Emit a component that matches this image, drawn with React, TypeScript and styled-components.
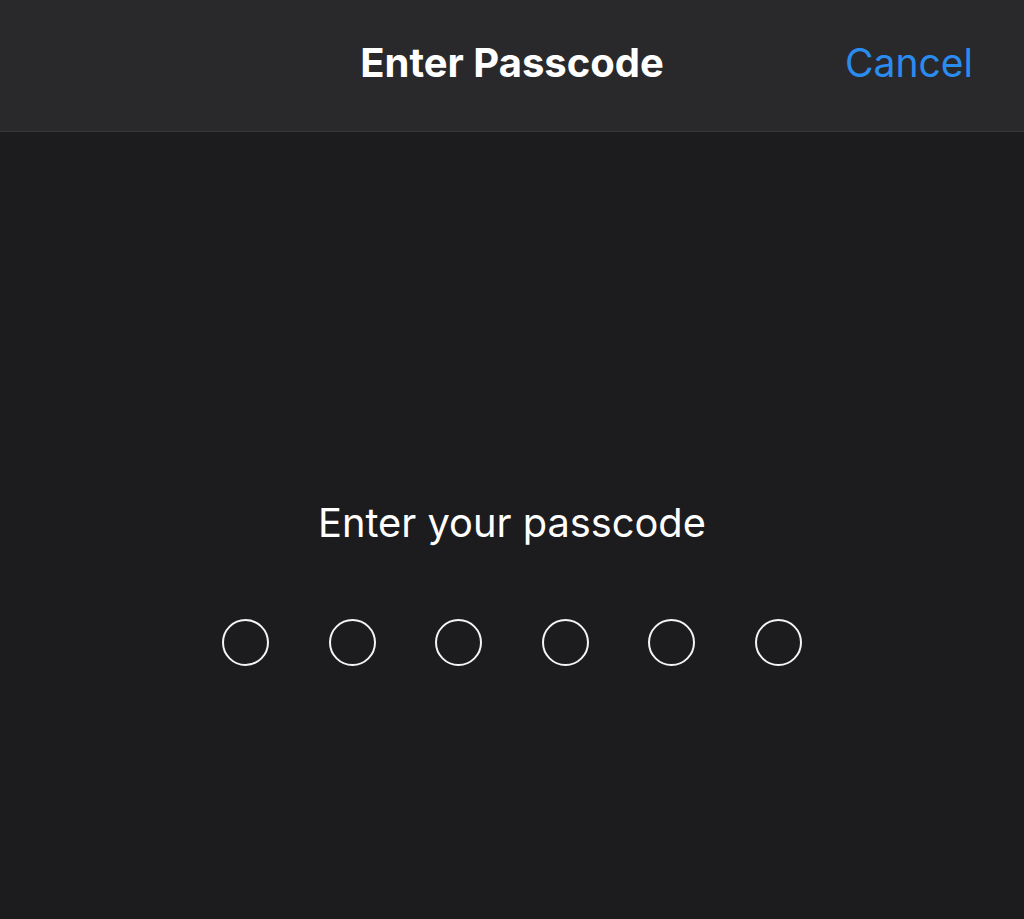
import styled, { createGlobalStyle } from 'styled-components';

const GlobalStyle = createGlobalStyle`
  html, body {
    margin: 0;
    padding: 0;
    background: #1c1c1e;
  }
  body {
    font-family: Inter, "Noto Sans", "Liberation Sans", sans-serif;
    -webkit-font-smoothing: antialiased;
  }
`;

const Screen = styled.div`
  display: flex;
  flex-direction: column;
  width: 1024px;
  height: 919px;
  background: #1c1c1e;
  overflow: hidden;
`;

const NavBar = styled.header`
  display: grid;
  grid-template-columns: 1fr auto 1fr;
  align-items: center;
  height: 132px;
  padding: 0 51px 6px;
  box-sizing: border-box;
  background: #29292b;
  border-bottom: 1px solid #38383a;
  flex-shrink: 0;
`;

const Title = styled.h1`
  grid-column: 2;
  margin: 0;
  font-size: 40px;
  line-height: 46px;
  font-weight: 700;
  color: #ffffff;
`;

const CancelButton = styled.button`
  grid-column: 3;
  justify-self: end;
  background: none;
  border: none;
  padding: 0;
  font-family: inherit;
  font-size: 39px;
  line-height: 46px;
  font-weight: 400;
  color: #2b8cf0;
  cursor: pointer;
`;

const Body = styled.main`
  flex: 1;
  display: flex;
  flex-direction: column;
  align-items: center;
  padding-top: 368px;
`;

const Prompt = styled.p`
  margin: 0;
  font-size: 39.8px;
  line-height: 46px;
  font-weight: 400;
  color: #ffffff;
`;

const DotRow = styled.div`
  display: flex;
  gap: 59.6px;
  margin-top: 73px;
`;

const Dot = styled.span<{ $filled?: boolean }>`
  display: block;
  width: 47px;
  height: 47px;
  box-sizing: border-box;
  border-radius: 50%;
  border: 2.2px solid #f4f4f4;
  background: ${(p) => (p.$filled ? '#f4f4f4' : 'transparent')};
`;

const CODE_LENGTH = 6;

export default function App() {
  const entered = 0;
  return (
    <>
      <GlobalStyle />
      <Screen>
        <NavBar>
          <Title>Enter Passcode</Title>
          <CancelButton>Cancel</CancelButton>
        </NavBar>
        <Body>
          <Prompt>Enter your passcode</Prompt>
          <DotRow>
            {Array.from({ length: CODE_LENGTH }).map((_, i) => (
              <Dot key={i} $filled={i < entered} />
            ))}
          </DotRow>
        </Body>
      </Screen>
    </>
  );
}
